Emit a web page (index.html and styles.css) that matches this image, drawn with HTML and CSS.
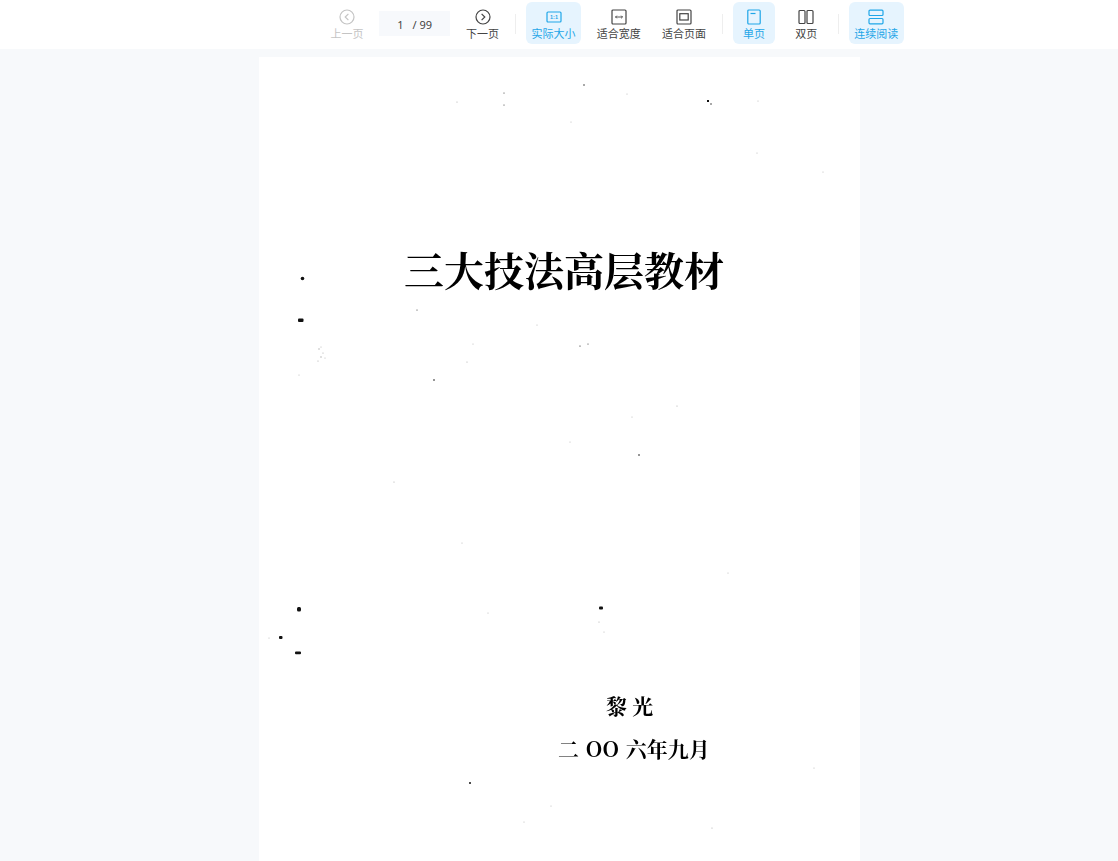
FILE: index.html
```html
<!DOCTYPE html>
<html lang="zh-CN">
<head>
<meta charset="utf-8">
<title>三大技法高层教材</title>
<link rel="stylesheet" href="styles.css">
</head>
<body>
<header class="toolbar">
  <button class="tool tool-disabled">
    <svg class="icon" viewBox="0 0 16 16"><circle cx="8" cy="8" r="7"/><path d="M9.400 4.800 6.200 8l3.200 3.200"/></svg>
    <span>上一页</span>
  </button>
  <div class="pager"><span class="pager-cur">1</span><span class="pager-total">/ 99</span></div>
  <button class="tool">
    <svg class="icon" viewBox="0 0 16 16"><circle cx="8" cy="8" r="7"/><path d="M6.600 4.800 9.800 8l-3.200 3.200"/></svg>
    <span>下一页</span>
  </button>
  <i class="sep"></i>
  <button class="tool tool-wide tool-active">
    <svg class="icon" viewBox="0 0 16 16"><rect x="1" y="3" width="14" height="10" rx="1"/><text x="8" y="10.200" class="icon-text">1:1</text></svg>
    <span>实际大小</span>
  </button>
  <button class="tool tool-wide">
    <svg class="icon" viewBox="0 0 16 16"><rect x="1" y="1" width="14" height="14" rx="1"/><path class="thin" d="M4.500 8h7M5.800 6.700 4.500 8l1.300 1.300M10.200 6.700 11.500 8l-1.300 1.300"/></svg>
    <span>适合宽度</span>
  </button>
  <button class="tool tool-wide">
    <svg class="icon" viewBox="0 0 16 16"><rect x="1" y="1" width="14" height="14" rx="1"/><rect x="3.800" y="4.700" width="8.400" height="6.300"/></svg>
    <span>适合页面</span>
  </button>
  <i class="sep"></i>
  <button class="tool tool-small tool-active">
    <svg class="icon" viewBox="0 0 16 16"><rect x="1.800" y="1" width="12.400" height="14" rx="1"/><path d="M4.500 4.500h5"/></svg>
    <span>单页</span>
  </button>
  <button class="tool tool-small">
    <svg class="icon" viewBox="0 0 16 16"><rect x="1" y="1.500" width="6" height="13" rx="1"/><rect x="9" y="1.500" width="6" height="13" rx="1"/></svg>
    <span>双页</span>
  </button>
  <i class="sep"></i>
  <button class="tool tool-wide tool-active">
    <svg class="icon" viewBox="0 0 16 16"><rect x="1" y="1.200" width="14" height="5.300" rx="1"/><rect x="1" y="9.500" width="14" height="5.300" rx="1"/></svg>
    <span>连续阅读</span>
  </button>
</header>
<main class="viewer">
  <article class="page">
    <svg class="specks" viewBox="0 0 601 804" aria-hidden="true">
      <g class="dark">
        <circle cx="43.500" cy="221.500" r="1.800"/><rect x="39" y="261.500" width="5.500" height="3.500" rx="1"/>
        <circle cx="175" cy="323" r=".8"/><circle cx="158" cy="253" r=".5"/><circle cx="321" cy="289" r=".6"/><circle cx="329" cy="287" r=".5"/>
        <circle cx="380" cy="398" r=".8"/><rect x="38" y="550" width="4" height="4.500" rx="1.500"/><rect x="20" y="579" width="3.500" height="3" rx="1"/>
        <rect x="36" y="594.500" width="6" height="2.800" rx="1"/><rect x="340" y="549.500" width="4" height="3" rx="1"/><circle cx="211" cy="726" r="1"/>
        <rect x="448" y="43" width="2" height="2"/><circle cx="452" cy="47" r=".7"/><circle cx="325" cy="28" r=".7"/><circle cx="245" cy="36" r=".5"/><circle cx="245" cy="48" r=".5"/>
      </g>
      <g class="faint">
        <circle cx="198" cy="45" r=".6"/><circle cx="368" cy="37" r=".5"/><circle cx="499" cy="44" r=".5"/><circle cx="312" cy="65" r=".5"/>
        <circle cx="135" cy="425" r=".6"/><circle cx="203" cy="486" r=".5"/><circle cx="418" cy="349" r=".6"/><circle cx="373" cy="360" r=".5"/><circle cx="208" cy="305" r=".6"/>
        <circle cx="214" cy="287" r=".5"/><circle cx="278" cy="268" r=".5"/><circle cx="453" cy="771" r=".6"/><circle cx="265" cy="765" r=".5"/><circle cx="555" cy="711" r=".5"/>
        <circle cx="469" cy="516" r=".5"/><circle cx="311" cy="385" r=".5"/><circle cx="229" cy="556" r=".5"/><circle cx="340" cy="565" r=".6"/><circle cx="345" cy="575" r=".5"/>
        <circle cx="60" cy="292" r=".7"/><circle cx="64" cy="296" r=".6"/><circle cx="62" cy="300" r=".7"/><circle cx="59" cy="304" r=".6"/><circle cx="66" cy="301" r=".5"/><circle cx="62" cy="290" r=".5"/>
        <circle cx="10" cy="581" r=".5"/><circle cx="292" cy="749" r=".5"/><circle cx="498" cy="96" r=".5"/><circle cx="564" cy="115" r=".5"/><circle cx="40" cy="318" r=".5"/>
      </g>
    </svg>
    <h1 class="title">三大技法高层教材</h1>
    <p class="author">黎 光</p>
    <p class="date">二 OO 六年九月</p>
  </article>
</main>
</body>
</html>
```
FILE: styles.css
```css
* { box-sizing: border-box; }
html, body { margin: 0; height: 100%; overflow: hidden; }
body {
  background: #f7f9fb;
  font-family: "Noto Sans CJK SC", "Noto Sans", sans-serif;
}
.toolbar {
  height: 49px;
  background: #fff;
  display: flex;
  align-items: flex-start;
  gap: 10.250px;
  padding: 2px 0 0 325px;
}
.tool {
  width: 44px;
  height: 42px;
  padding: 7px 0 0;
  border: 0;
  border-radius: 6px;
  background: none;
  color: #444;
  font: 11px/16px "Noto Sans CJK SC", sans-serif;
  display: flex;
  flex-direction: column;
  align-items: center;
  white-space: nowrap;
}
.tool-wide { width: 55px; }
.tool-small { width: 42px; }
.tool-active { background: #e6f4fe; color: #1fa6e8; }
.tool-disabled { color: #c4c4c4; }
.icon {
  width: 16px;
  height: 16px;
  fill: none;
  stroke: currentColor;
  stroke-width: 1.200;
}
.thin { stroke-width: .9; }
.icon-text {
  font: 700 5.500px "Liberation Sans", sans-serif;
  text-anchor: middle;
  fill: currentColor;
  stroke: none;
}
.pager {
  width: 71px;
  height: 25px;
  margin-top: 9px;
  background: #f7f9fc;
  color: #444;
  font: 11px/27px "Noto Sans", sans-serif;
  display: flex;
  padding-left: 18px;
  gap: 9px;
}
.sep {
  width: 1px;
  height: 20px;
  margin-top: 12px;
  background: #eee;
}
.viewer {
  display: flex;
  justify-content: center;
  padding: 8px 0 0 1px;
}
.page {
  position: relative;
  width: 601px;
  height: 804px;
  flex: none;
  background: #fff;
  color: #000;
  font-family: "Noto Serif CJK SC", "Noto Sans CJK SC", serif;
  display: flex;
  flex-direction: column;
  overflow: hidden;
}
.specks {
  position: absolute;
  inset: 0;
  width: 601px;
  height: 804px;
  filter: blur(.3px);
}
.dark { fill: #111; }
.faint { fill: #aaa; }
.title {
  margin: 188px 0 0 145px;
  font-size: 40px;
  line-height: 48px;
  font-weight: 700;
  white-space: nowrap;
  filter: blur(.4px);
}
.author {
  margin: 398px 0 0 347px;
  font-size: 21px;
  line-height: 28px;
  font-weight: 700;
  filter: blur(.3px);
}
.date {
  margin: 15px 0 0 299px;
  font-size: 21px;
  line-height: 28px;
  font-weight: 700;
  word-spacing: 1.500px;
  white-space: nowrap;
  filter: blur(.3px);
}
```
